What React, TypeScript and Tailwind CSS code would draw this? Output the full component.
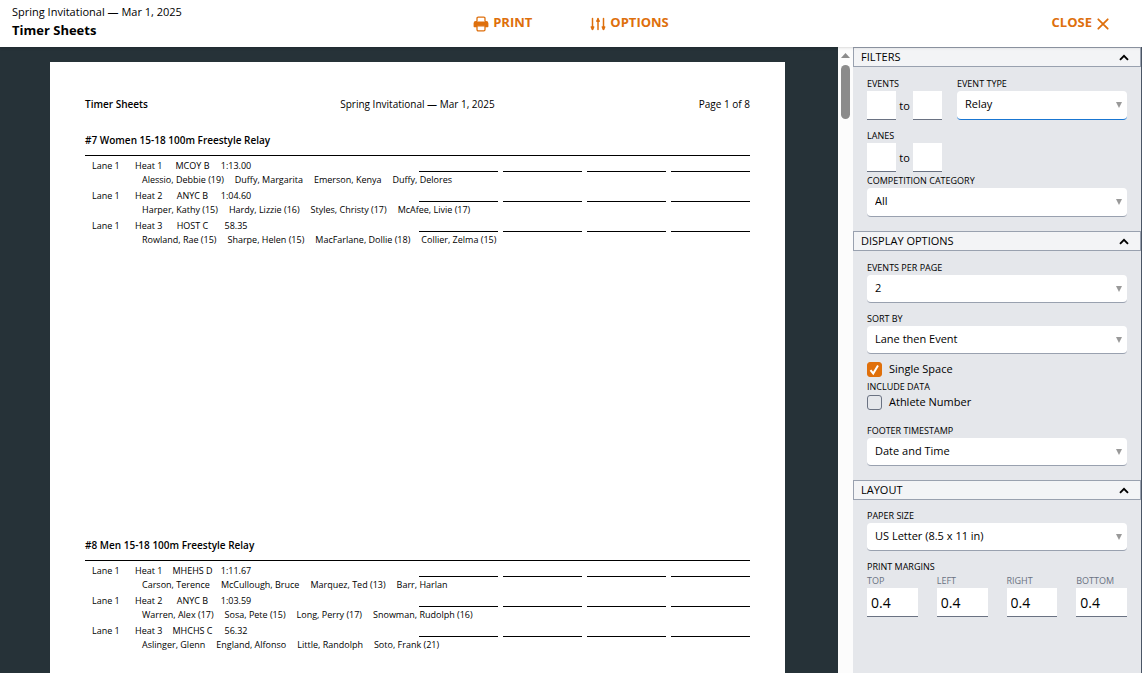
import type { ReactNode } from "react";

type Heat = { heat: number; team: string; time: string; swimmers: string[] };
type RelayEvent = { title: string; heats: Heat[] };

const events: RelayEvent[] = [
  {
    title: "#7 Women 15-18 100m Freestyle Relay",
    heats: [
      { heat: 1, team: "MCOY B", time: "1:13.00", swimmers: ["Alessio, Debbie (19)", "Duffy, Margarita", "Emerson, Kenya", "Duffy, Delores"] },
      { heat: 2, team: "ANYC B", time: "1:04.60", swimmers: ["Harper, Kathy (15)", "Hardy, Lizzie (16)", "Styles, Christy (17)", "McAfee, Livie (17)"] },
      { heat: 3, team: "HOST C", time: "58.35", swimmers: ["Rowland, Rae (15)", "Sharpe, Helen (15)", "MacFarlane, Dollie (18)", "Collier, Zelma (15)"] },
    ],
  },
  {
    title: "#8 Men 15-18 100m Freestyle Relay",
    heats: [
      { heat: 1, team: "MHEHS D", time: "1:11.67", swimmers: ["Carson, Terence", "McCullough, Bruce", "Marquez, Ted (13)", "Barr, Harlan"] },
      { heat: 2, team: "ANYC B", time: "1:03.59", swimmers: ["Warren, Alex (17)", "Sosa, Pete (15)", "Long, Perry (17)", "Snowman, Rudolph (16)"] },
      { heat: 3, team: "MHCHS C", time: "56.32", swimmers: ["Aslinger, Glenn", "England, Alfonso", "Little, Randolph", "Soto, Frank (21)"] },
    ],
  },
];

function PrinterIcon() {
  return (
    <svg className="mt-0.5" width="16" height="16" viewBox="0 0 16 16" fill="none" aria-hidden="true">
      <path d="M2.8 5h10.4a2.2 2.2 0 0 1 2.2 2.200v3.200a.8.8 0 0 1-.8.8H1.400a.8.8 0 0 1-.8-.8V7.200A2.200 2.200 0 0 1 2.800 5z" fill="currentColor" />
      <path d="M4 5.500V2.400a1.200 1.200 0 0 1 1.200-1.200h5.600A1.200 1.200 0 0 1 12 2.400v3.100" fill="#fff" stroke="currentColor" strokeWidth="1.300" />
      <path d="M4 9.800h8v3.800a1.200 1.200 0 0 1-1.200 1.200H5.200A1.200 1.200 0 0 1 4 13.600z" fill="#fff" stroke="currentColor" strokeWidth="1.300" />
    </svg>
  );
}

function SlidersIcon() {
  return (
    <svg className="mt-0.5" width="16" height="14" viewBox="0 0 16 14" fill="none" stroke="currentColor" strokeWidth="1.500" strokeLinecap="round" aria-hidden="true">
      <path d="M2.500 1.500v11M8 1.500v11M13.500 1.500v11" />
      <path d="M1.300 10h2.400L2.500 12.300zM6.800 4.200h2.400L8 2zM12.300 10h2.400l-1.200 2.300z" fill="currentColor" strokeLinejoin="round" />
    </svg>
  );
}

function CloseIcon() {
  return (
    <svg className="mt-0.5" width="12" height="12" viewBox="0 0 12 12" stroke="currentColor" strokeWidth="1.800" strokeLinecap="round" aria-hidden="true">
      <path d="M1.300 1.300l9.400 9.400M10.700 1.300l-9.400 9.400" />
    </svg>
  );
}

function Section({ title, children }: { title: string; children: ReactNode }) {
  return (
    <section>
      <button type="button" aria-expanded="true" className="flex h-5 w-full items-center justify-between border border-gray-400 bg-gray-100 pr-[11px] pl-[7px] text-[11px] font-medium">
        {title}
        <svg width="10" height="7" viewBox="0 0 10 7" fill="none" stroke="currentColor" strokeWidth="1.900" aria-hidden="true">
          <path d="M1 5.800l4-4 4 4" />
        </svg>
      </button>
      <div className="px-3.5">{children}</div>
    </section>
  );
}

const labelClass = "block h-4 text-[9px] leading-[17px] font-medium whitespace-nowrap";

type SelectFieldProps = { id: string; label: string; value: string; tall?: boolean; focused?: boolean };

function SelectField({ id, label, value, tall = false, focused = false }: SelectFieldProps) {
  return (
    <div>
      <label htmlFor={id} className={labelClass}>{label}</label>
      <div className="relative">
        <select
          id={id}
          className={
            "block w-full appearance-none rounded border-b bg-white px-2 text-[11px] outline-none " +
            (tall ? "h-[29px] pb-0.5 " : "h-7 ") +
            (focused ? "border-[#1976d2]" : "border-gray-400")
          }
        >
          <option>{value}</option>
        </select>
        <svg className="pointer-events-none absolute top-[11px] right-[5px]" width="6" height="6" viewBox="0 0 6 6" fill="#999" aria-hidden="true">
          <path d="M0 0h6L3 6z" />
        </svg>
      </div>
    </div>
  );
}

function RangeField({ id, label }: { id: string; label: string }) {
  const box = "h-[29px] w-[29px] border-b border-gray-500 bg-white px-1 text-xs outline-none";
  return (
    <div>
      <label htmlFor={id} className={labelClass}>{label}</label>
      <div className="flex items-center text-[11px]">
        <input id={id} className={box} />
        <span className="w-[17px] pt-0.5 text-center">to</span>
        <input aria-label={label + " to"} className={box} />
      </div>
    </div>
  );
}

function CheckField({ label, checked = false }: { label: string; checked?: boolean }) {
  return (
    <label className="flex h-4 items-center gap-[7px] text-[11px]">
      <span className="relative flex">
        <input type="checkbox" defaultChecked={checked} className="peer h-[15px] w-[15px] appearance-none rounded-[3px] border border-gray-500 checked:border-[#e0700b] checked:bg-[#e0700b]" />
        <svg className="pointer-events-none absolute inset-0 hidden peer-checked:block" width="15" height="15" viewBox="0 0 15 15" fill="none" stroke="#fff" strokeWidth="2" aria-hidden="true">
          <path d="M3.500 8.200l2.700 3.300L11 3.500" />
        </svg>
      </span>
      {label}
    </label>
  );
}

function HeatRow({ heat }: { heat: Heat }) {
  return (
    <li>
      <div className="flex h-3.5 pl-[7px] text-[9px] leading-4">
        <span className="w-[43px]">Lane 1</span>
        <span className="w-9">Heat {heat.heat}</span>
        <span className="w-[43px] text-center whitespace-nowrap">{heat.team}</span>
        <span className="w-11 text-center">{heat.time}</span>
        <span className="ml-auto flex gap-[5px]">
          {[0, 1, 2, 3].map((slot) => (
            <span key={slot} className="w-[79px] border-b border-black" />
          ))}
        </span>
      </div>
      <div className="flex h-4 gap-[11px] pl-[57px] text-[9px] leading-4 whitespace-nowrap">
        {heat.swimmers.map((name) => (
          <span key={name}>{name}</span>
        ))}
      </div>
    </li>
  );
}

export default function App() {
  return (
    <div className="flex h-screen flex-col overflow-hidden bg-white font-['Open_Sans',sans-serif] text-black">
      <header className="relative z-10 grid h-[47px] shrink-0 grid-cols-[1fr_auto_1fr] bg-white shadow">
        <div className="pt-1 pl-3">
          <p className="text-[11px] leading-4">Spring Invitational — Mar 1, 2025</p>
          <h1 className="text-[13px] leading-5 font-bold">Timer Sheets</h1>
        </div>
        <div className="flex items-center gap-[58px] pb-0.5 text-[13px] font-bold text-[#de6f0c]">
          <button type="button" className="flex items-center gap-1"><PrinterIcon />PRINT</button>
          <button type="button" className="flex items-center gap-1"><SlidersIcon />OPTIONS</button>
        </div>
        <div className="flex items-center justify-end pr-[33px] pb-0.5 text-[13px] font-bold text-[#de6f0c]">
          <button type="button" className="flex items-center gap-[5px]">CLOSE<CloseIcon /></button>
        </div>
      </header>

      <div className="flex min-h-0 flex-1">
        <main className="min-w-0 flex-1 overflow-hidden bg-[#263238] pt-[15px] pr-[53px] pl-[50px]">
          <article className="min-h-full bg-white px-[35px] pt-[34px]">
            <div className="grid h-4 grid-cols-3 text-[10px] leading-4">
              <strong className="font-semibold">Timer Sheets</strong>
              <span className="text-center whitespace-nowrap">Spring Invitational — Mar 1, 2025</span>
              <span className="text-right">Page 1 of 8</span>
            </div>
            <div className="pt-5">
              {events.map((event) => (
                <section key={event.title} className="h-[405px]">
                  <h2 className="h-[23px] text-[10px] leading-4 font-semibold">{event.title}</h2>
                  <ul className="border-t border-black pt-0.5">
                    {event.heats.map((heat) => (
                      <HeatRow key={heat.heat} heat={heat} />
                    ))}
                  </ul>
                </section>
              ))}
            </div>
          </article>
        </main>

        <div className="flex w-[15px] flex-col items-center bg-[#fcfcfc] pt-1.5" aria-hidden="true">
          <svg width="9" height="5" viewBox="0 0 9 5" fill="#8b8b8b"><path d="M4.500 0L9 5H0z" /></svg>
          <div className="mt-[7px] h-[54px] w-[9px] rounded-full bg-[#8b8b8b]" />
        </div>

        <aside className="w-[289px] shrink-0 border-r border-gray-600 bg-gray-200">
          <Section title="FILTERS">
            <div className="flex gap-[15px] pt-2">
              <RangeField id="events" label="EVENTS" />
              <div className="flex-1"><SelectField id="event-type" label="EVENT TYPE" value="Relay" tall focused /></div>
            </div>
            <div className="pt-[7px]"><RangeField id="lanes" label="LANES" /></div>
            <div className="pb-3.5"><SelectField id="category" label="COMPETITION CATEGORY" value="All" tall /></div>
          </Section>
          <Section title="DISPLAY OPTIONS">
            <div className="pt-2"><SelectField id="per-page" label="EVENTS PER PAGE" value="2" /></div>
            <div className="pt-[7px] pb-[7px]"><SelectField id="sort-by" label="SORT BY" value="Lane then Event" /></div>
            <CheckField label="Single Space" checked />
            <fieldset className="pt-px">
              <legend className={labelClass}><span className="block pt-px">INCLUDE DATA</span></legend>
              <CheckField label="Athlete Number" />
            </fieldset>
            <div className="pt-3 pb-3.5"><SelectField id="timestamp" label="FOOTER TIMESTAMP" value="Date and Time" /></div>
          </Section>
          <Section title="LAYOUT">
            <div className="pt-[7px]"><SelectField id="paper" label="PAPER SIZE" value="US Letter (8.5 x 11 in)" /></div>
            <div className="pt-[7px]">
              <p className={labelClass}>PRINT MARGINS</p>
              <div className="grid grid-cols-4 gap-[19px]">
                {["TOP", "LEFT", "RIGHT", "BOTTOM"].map((side) => (
                  <label key={side} className="block text-[9px] leading-[14px] text-gray-500">
                    {side}
                    <input defaultValue="0.4" className="block h-[29px] w-full border-b border-gray-500 bg-white px-1 text-sm text-black outline-none" />
                  </label>
                ))}
              </div>
            </div>
          </Section>
        </aside>
      </div>
    </div>
  );
}
